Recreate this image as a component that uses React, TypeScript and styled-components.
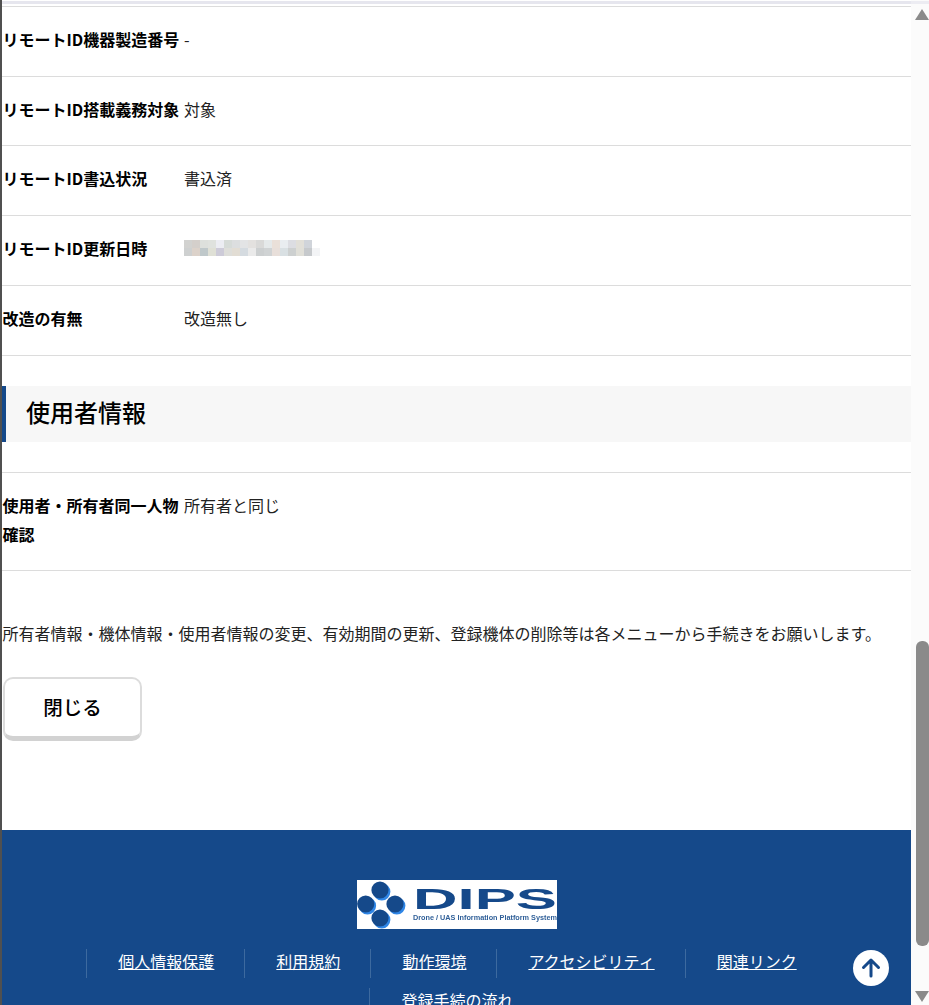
import React from "react";
import styled, { createGlobalStyle } from "styled-components";

const Global = createGlobalStyle`
  html, body { margin: 0; padding: 0; height: 100%; overflow: hidden; background: #fff; }
  body { font-family: "Noto Sans CJK JP", "Liberation Sans", sans-serif; color: #000; }
  * { box-sizing: border-box; }
`;

const Frame = styled.div`
  display: flex;
  height: 1005px;
  width: 929px;
  overflow: hidden;
`;
const Edge = styled.div`
  width: 2px;
  flex: none;
  background: #505050;
`;
const Page = styled.div`
  width: 909px;
  flex: none;
  height: 1005px;
  overflow: hidden;
`;
const TopBand = styled.div`
  height: 3px;
  margin-top: 1px;
  background: #e6e6ee;
  margin-bottom: 1.85px;
`;
const Table = styled.div`
  border-top: 1px solid #dcdcdc;
`;
const Row = styled.div`
  display: flex;
  border-bottom: 1px solid #dcdcdc;
  padding: 18px 0 22px;
  font-size: 16px;
  line-height: 28.8px;
`;
const Label = styled.div`
  width: 182px;
  flex: none;
  font-weight: 700;
  padding: 0 2px 0 0.5px;
`;
const Value = styled.div`
  color: #222;
`;
const Mosaic = styled.div`
  display: grid;
  grid-template-columns: repeat(17, 8px);
  grid-auto-rows: 8px;
  margin-top: 6px;
  height: 16px;
`;
const Cell = styled.span<{ $c: string }>`
  background: ${(p) => p.$c};
`;
const SectionHead = styled.h2`
  margin: 30px 0;
  height: 56px;
  display: flex;
  align-items: center;
  background: #f7f7f7;
  border-left: 4px solid #15498a;
  padding: 0 0 4px 20px;
  font-size: 24px;
  font-weight: 500;
`;
const Notice = styled.p`
  margin: 47.5px 0 0;
  padding-left: 0.5px;
  font-size: 16px;
  line-height: 28.8px;
  color: #222;
  white-space: nowrap;
`;
const CloseButton = styled.button`
  display: block;
  margin: 29.3px 0 0 1px;
  width: 139px;
  height: 64px;
  padding: 0 0 2px;
  background: #fff;
  border: 2px solid #dcdcdc;
  border-bottom: 5px solid #d2d2d2;
  border-radius: 10px;
  font-family: inherit;
  font-size: 19.5px;
  font-weight: 500;
  color: #000;
`;
const Footer = styled.footer`
  margin-top: 88.5px;
  background: #15498a;
  height: 300px;
  padding-top: 50px;
  position: relative;
`;
const Logo = styled.svg`
  display: block;
  width: 200px;
  height: 49px;
  margin: 0 auto;
  filter: blur(0.3px);
`;
const Nav = styled.nav`
  display: flex;
  flex-wrap: wrap;
  justify-content: center;
  row-gap: 10px;
  margin-top: 20px;
  padding: 0 84px;
`;
const NavItem = styled.a`
  border-left: 1px solid #3d6a9f;
  padding: 0 30px 0 31px;
  height: 29px;
  line-height: 25px;
  font-size: 16px;
  color: #fff;
  text-decoration: underline;
  white-space: nowrap;
`;
const TopButton = styled.div`
  position: absolute;
  right: 22px;
  top: 120px;
  width: 36px;
  height: 36px;
  border-radius: 50%;
  background: #fff;
  display: flex;
  align-items: center;
  justify-content: center;
`;
const ScrollTrack = styled.div`
  width: 18px;
  flex: none;
  background: #fbfbfb;
  display: flex;
  flex-direction: column;
  align-items: flex-end;
`;
const TrackBand = styled.div`
  width: 100%;
  height: 3px;
  margin-top: 1px;
  background: #ececf2;
`;
const ArrowUp = styled.div`
  margin-top: 5px;
  width: 0;
  height: 0;
  border-left: 7px solid transparent;
  border-right: 7px solid transparent;
  border-bottom: 11px solid #8a8a8a;
`;
const Thumb = styled.div`
  margin-top: 621px;
  width: 13px;
  height: 305px;
  border-radius: 6px;
  background: #8a8a8a;
`;
const ArrowDown = styled.div`
  margin-top: 45px;
  width: 0;
  height: 0;
  border-left: 7px solid transparent;
  border-right: 7px solid transparent;
  border-top: 11px solid #8a8a8a;
`;

const mosaic = [
  "#d2d2d0","#d4cfcb","#dde0dc","#dfe2de","#ecedf3","#d6dbd8","#dcdedf","#e3e4e5","#e3e1df","#d9d9d8","#e5e9ea","#eae0d9","#e9edf0","#dcdde2","#e1dfd8","#d0d4da","#ffffff",
  "#ced0d0","#dcd2ca","#bfc8ca","#dfe0d6","#cdcbd8","#dededa","#e2ddd4","#d5dbe0","#eaeaea","#cccfd0","#d0d3d4","#e8dfda","#d9e0e3","#cdd0d0","#e0dfd8","#c6c9cc","#f3f4f6",
];

const rows: [string, string][] = [
  ["リモートID機器製造番号", "-"],
  ["リモートID搭載義務対象", "対象"],
  ["リモートID書込状況", "書込済"],
];

const circles = [
  [23, 10],
  [8.7, 24],
  [38, 24],
  [23, 38],
];

export default function App() {
  return (
    <Frame>
      <Global />
      <Edge />
      <Page>
        <TopBand />
        <Table>
          {rows.map(([l, v]) => (
            <Row key={l}>
              <Label>{l}</Label>
              <Value>{v}</Value>
            </Row>
          ))}
          <Row>
            <Label>リモートID更新日時</Label>
            <Mosaic>
              {mosaic.map((c, i) => (
                <Cell key={i} $c={c} />
              ))}
            </Mosaic>
          </Row>
          <Row>
            <Label>改造の有無</Label>
            <Value>改造無し</Value>
          </Row>
        </Table>
        <SectionHead>使用者情報</SectionHead>
        <Table>
          <Row>
            <Label>使用者・所有者同一人物確認</Label>
            <Value>所有者と同じ</Value>
          </Row>
        </Table>
        <Notice>所有者情報・機体情報・使用者情報の変更、有効期間の更新、登録機体の削除等は各メニューから手続きをお願いします。</Notice>
        <CloseButton>閉じる</CloseButton>
        <Footer>
          <Logo viewBox="0 0 200 49">
            <rect width="200" height="49" fill="#fff" />
            {circles.map(([x, y]) => (
              <g key={`${x}-${y}`}>
                <circle cx={x + 1.8} cy={y + 1.8} r="8.6" fill="#2f86e6" />
                <circle cx={x} cy={y} r="8.6" fill="#15498a" />
              </g>
            ))}
            <text x="56" y="29" fontFamily="Liberation Sans" fontWeight="700" fontSize="29" fill="#15498a" textLength="144" lengthAdjust="spacingAndGlyphs">DIPS</text>
            <text x="56" y="40" fontFamily="Liberation Sans" fontWeight="700" fontSize="7.5" fill="#2f5f98" textLength="144" lengthAdjust="spacingAndGlyphs">Drone / UAS Information Platform System</text>
          </Logo>
          <Nav>
            <NavItem>個人情報保護</NavItem>
            <NavItem>利用規約</NavItem>
            <NavItem>動作環境</NavItem>
            <NavItem>アクセシビリティ</NavItem>
            <NavItem>関連リンク</NavItem>
            <NavItem>登録手続の流れ</NavItem>
          </Nav>
          <TopButton>
            <svg width="22" height="22" viewBox="0 0 22 22" fill="none" stroke="#15498a" strokeWidth="3" strokeLinecap="round" strokeLinejoin="round">
              <path d="M11 19V3.5M3.5 10.5L11 3l7.5 7.5" />
            </svg>
          </TopButton>
        </Footer>
      </Page>
      <ScrollTrack>
        <TrackBand />
        <ArrowUp />
        <Thumb />
        <ArrowDown />
      </ScrollTrack>
    </Frame>
  );
}
